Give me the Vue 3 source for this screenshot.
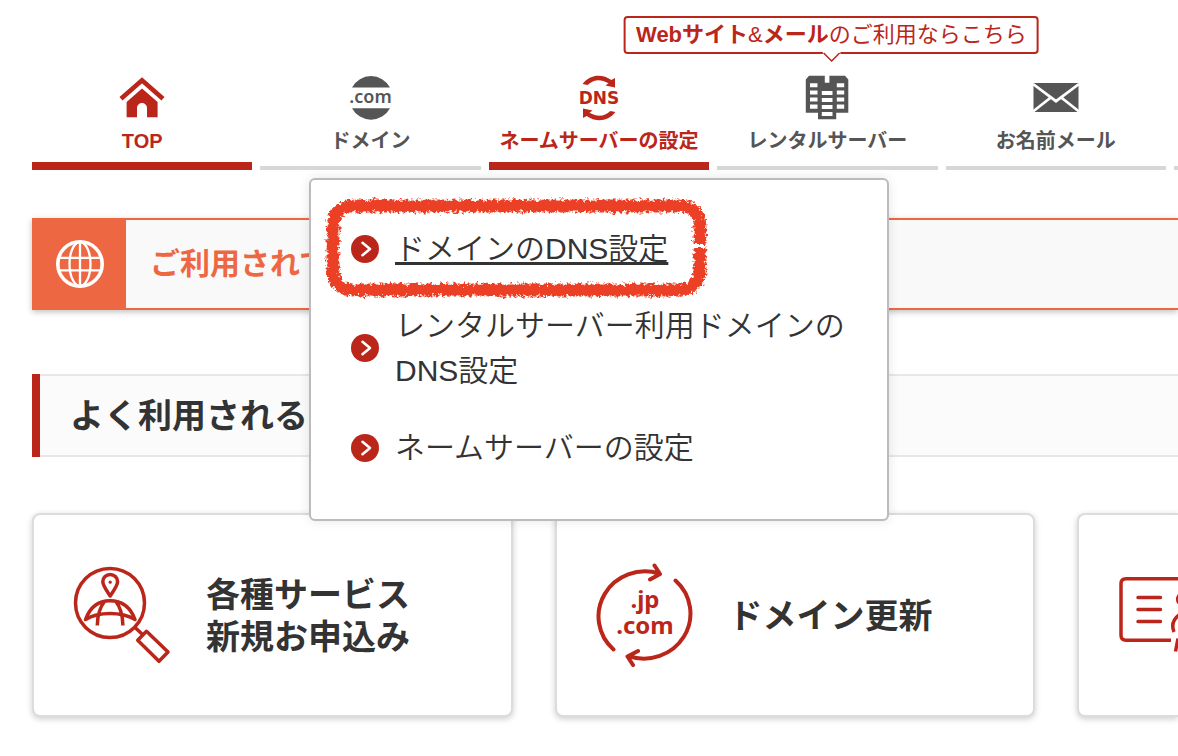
<script setup>
const menuItems = [
  { label: 'ドメインのDNS設定', current: true },
  { label: 'レンタルサーバー利用ドメインのDNS設定', current: false },
  { label: 'ネームサーバーの設定', current: false },
]
</script>

<template>
  <div class="page">
    <nav class="nav" aria-label="メイン">
      <div class="item active">
        <a href="#top">
          <svg class="nav-icon" viewBox="0 0 48 48" aria-hidden="true">
            <path d="M3 24.800 24 6.200l21 18.600" fill="none" stroke="currentColor" stroke-width="4.600" />
            <path d="M24 14.500 39.600 28v15.200H29V34a5 5 0 0 0-10 0v9.200H8.600V28z" fill="currentColor" />
          </svg>
          <span>TOP</span>
        </a>
      </div>
      <div class="item">
        <a href="#domain">
          <svg class="nav-icon" viewBox="0 0 48 48" aria-hidden="true">
            <path d="M5 13.500a21.500 21.500 0 0 1 38 0zM5 34.200h38a21.500 21.500 0 0 1-38 0z" fill="currentColor" />
            <text x="23.500" y="29" text-anchor="middle" class="com">.com</text>
          </svg>
          <span>ドメイン</span>
        </a>
      </div>
      <div class="item active">
        <a href="#dns">
          <svg class="nav-icon" viewBox="0 0 48 48" aria-hidden="true">
            <g id="dns-arrow" fill="currentColor">
              <path d="M7.600 10C15 .200 27 -.500 36.400 6L40 4v9.500l-9.500-2 3-2.300C25 4.500 18.500 5.500 12.600 11z" />
            </g>
            <use href="#dns-arrow" transform="rotate(180 24 24)" />
            <text x="24" y="30.400" text-anchor="middle" class="dns">DNS</text>
          </svg>
          <span>ネームサーバーの設定</span>
        </a>
        <div class="menu">
          <ul>
            <li v-for="m in menuItems" :key="m.label">
              <a href="#menu" :class="{ current: m.current }">
                <svg class="bullet" viewBox="0 0 28 28" aria-hidden="true">
                  <circle cx="14" cy="14" r="14" fill="#bb261a" />
                  <path d="M11.500 7.800 19 14l-7.500 6.200" fill="none" stroke="#fff" stroke-width="2.600" stroke-linecap="round" stroke-linejoin="round" />
                </svg>
                <span>{{ m.label }}</span>
              </a>
            </li>
          </ul>
          <svg class="crayon" viewBox="0 0 388 104" aria-hidden="true">
            <defs>
              <filter id="crayon" filterUnits="userSpaceOnUse" x="0" y="0" width="388" height="104">
                <feTurbulence type="fractalNoise" baseFrequency="0.300" numOctaves="3" seed="4" result="n" />
                <feDisplacementMap in="SourceGraphic" in2="n" scale="8" xChannelSelector="R" yChannelSelector="G" />
              </filter>
            </defs>
            <g filter="url(#crayon)" fill="none" stroke="#ec4026">
              <path d="M377 48V31Q377 10 355 10H32Q10 10 10 31V73Q10 94 32 94H355Q377 94 377 73V52" stroke-width="10.500" />
              <path d="M377 48V31Q377 10 355 10H32Q10 10 10 31V73Q10 94 32 94H355Q377 94 377 73V52" stroke-width="13" stroke-dasharray="3 1 5 1.500 2 1" />
            </g>
          </svg>
        </div>
      </div>
      <div class="item">
        <div class="callout"><b>Webサイト</b>&amp;<b>メール</b>のご利用ならこちら
          <svg class="tail" viewBox="0 0 18 10" aria-hidden="true">
            <path d="M0 0h18v2L9 9 0 2z" fill="#fff" />
            <path d="M1 1l8 8 8-8" fill="none" stroke="#bb261a" stroke-width="1.500" />
          </svg>
        </div>
        <a href="#server">
          <svg class="nav-icon" viewBox="0 0 48 48" aria-hidden="true">
            <path fill="currentColor" fill-rule="evenodd" d="M6 1.800h15.800v7h4.600v-7H42l3.300 3.700v33.300H33.200v6.400H15v-6.400H2.800V5.500zM7 9.300v4h7.500v-4zm0 7.200v4h7.500v-4zm0 7v4h7.500v-4zm0 7v4.200h7.500v-4.200zM33.800 9.300v4h7.400v-4zm0 7.200v4h7.400v-4zm0 7v4h7.400v-4zm0 7v4.200h7.400v-4.200zM18.800 17v4h10.700v-4zm0 7v4h10.700v-4zm0 7v4h10.700v-4zm0 7v4h10.700v-4z" />
          </svg>
          <span>レンタルサーバー</span>
        </a>
      </div>
      <div class="item">
        <a href="#mail">
          <svg class="nav-icon" viewBox="0 0 48 48" aria-hidden="true">
            <path d="M1.500 9h45v29h-45z" fill="currentColor" />
            <path d="M1 10 24 27.200 47 10M1 37.500 18.800 23.500M47 37.500 29.200 23.500" fill="none" stroke="#fff" stroke-width="2.800" />
          </svg>
          <span>お名前メール</span>
        </a>
      </div>
      <div class="item"></div>
    </nav>

    <section class="notice">
      <div class="notice-icon">
        <svg viewBox="0 0 48 48" fill="none" stroke="#fff" stroke-width="2.300" aria-hidden="true">
          <circle cx="24" cy="24" r="22.200" stroke-width="3.600" />
          <ellipse cx="24" cy="24" rx="10.500" ry="22" />
          <path d="M24 2v44M4 17.800h40M4 30.400h40" />
        </svg>
      </div>
      <p>ご利用されて</p>
    </section>

    <div class="heading">
      <h2>よく利用される</h2>
    </div>

    <section class="cards">
      <a class="card" href="#apply">
        <svg class="card-icon" viewBox="0 0 104 104" fill="none" stroke="#bb261a" stroke-width="3.500" aria-hidden="true">
          <circle cx="40" cy="40" r="34.500" />
          <path d="M40.200 33C36.500 27.500 32.800 22.500 32.800 18.800a7.400 7.400 0 0 1 14.800 0C47.600 22.500 43.900 27.500 40.200 33z" stroke-linejoin="round" />
          <circle cx="40.200" cy="19.200" r="1.600" fill="#bb261a" stroke="none" />
          <path d="M15.500 56.500C20.500 43 29.500 37.800 40 37.800S60 43 65 56.500C51.500 48.500 28.500 48.500 15.500 56.500zM34.500 38.500C30 44 27.500 52 27.300 62.500M45.800 38.500C50.300 44 52.700 52 52.900 62.500" stroke-linejoin="round" />
          <path d="M64.500 64l7.500 7M76.500 68.300 98 89 89 98.300 67.700 77.300z" stroke-linejoin="round" />
        </svg>
        <span>各種サービス<br>新規お申込み</span>
      </a>
      <a class="card" href="#renew">
        <svg class="card-icon" viewBox="0 0 104 104" aria-hidden="true">
          <g fill="none" stroke="#bb261a" stroke-width="4" stroke-linecap="round" stroke-linejoin="round">
            <path d="M20.500 86.500A46.500 45 0 0 1 66 10.500M61.500 2.500 67 11 57 16.500" />
            <path d="M82.500 17.500A46.500 45 0 0 1 35.500 93M45 88 34.500 93.500 40 102" />
          </g>
          <text x="52" y="45" text-anchor="middle" class="tld">.jp</text>
          <text x="52" y="71" text-anchor="middle" class="tld">.com</text>
        </svg>
        <span>ドメイン更新</span>
      </a>
      <a class="card cut" href="#account" aria-label="会員情報">
        <svg class="card-icon" viewBox="0 0 104 104" fill="none" stroke="#bb261a" stroke-width="3.500" stroke-linecap="round" aria-hidden="true">
          <path d="M104 15.700H9q-5 0-5 5v51.600q0 5 5 5h45" stroke-linecap="butt" />
          <path d="M21 34.500h22.500M21 46.500h22.500M21 58.500h22.500" />
          <path d="M63 31q-4 5-1 9M62 52q-9 7-5 17M61 75.500l-2.500 13" stroke-linecap="butt" />
        </svg>
      </a>
    </section>
  </div>
</template>

<style>
body {
  margin: 0;
  background: #fff;
}
</style>

<style scoped>
.page {
  padding: 62px 0 40px 32px;
  overflow: hidden;
  font-family: "Liberation Sans", "Noto Sans CJK JP", sans-serif;
  color: #333;
}
a {
  color: inherit;
  text-decoration: none;
}
svg {
  display: block;
  flex: none;
}
.nav {
  display: grid;
  grid-template-columns: repeat(5, 1fr) 4px;
  gap: 8px;
  position: relative;
  z-index: 2;
}
.item {
  position: relative;
  height: 104px;
  border-bottom: 4px solid #d7d7d7;
  color: #555;
  font-size: 20px;
  font-weight: 700;
}
.item.active {
  height: 100px;
  border-bottom: 8px solid #bb261a;
  color: #bb261a;
}
.item > a {
  display: flex;
  flex-direction: column;
  align-items: center;
  padding-top: 12px;
  line-height: 38px;
  white-space: nowrap;
}
.nav-icon {
  width: 48px;
  height: 48px;
}
.com {
  font: 600 18px "Noto Sans", sans-serif;
  fill: currentColor;
}
.dns {
  font: 700 17px "DejaVu Sans", sans-serif;
  fill: currentColor;
}
.tld {
  font: 700 24px "Noto Sans", sans-serif;
  fill: #bb261a;
}
.callout {
  position: absolute;
  top: -46px;
  left: calc(50% + 4px);
  transform: translateX(-50%);
  padding: 0 10px;
  border: 2px solid #bb261a;
  border-radius: 4px;
  background: #fff;
  color: #bb261a;
  font-size: 22px;
  font-weight: 400;
  line-height: 34px;
  white-space: nowrap;
}
.callout b {
  font-weight: 700;
}
.tail {
  position: absolute;
  top: 100%;
  left: calc(50% - 9px);
  width: 18px;
  height: 10px;
}
.menu {
  position: absolute;
  top: calc(100% + 16px);
  left: 50%;
  box-sizing: border-box;
  width: 580px;
  padding: 46px 40px 49px;
  transform: translateX(-50%);
  border: 2px solid #bbb;
  border-radius: 6px;
  background: #fff;
  box-shadow: 0 0 12px rgba(0, 0, 0, 0.1);
  color: #333;
  font-size: 30px;
  font-weight: 350;
  line-height: 45px;
}
.menu ul {
  display: flex;
  flex-direction: column;
  gap: 32px;
  margin: 0;
  padding: 0;
  list-style: none;
}
.menu a {
  display: flex;
  align-items: center;
  gap: 16px;
}
.menu .current span {
  text-decoration: underline;
  text-decoration-thickness: 3px;
  text-underline-offset: 3px;
  text-decoration-skip-ink: none;
}
.bullet {
  width: 28px;
  height: 28px;
}
.crayon {
  position: absolute;
  top: 16px;
  left: 12px;
  width: 388px;
  height: 104px;
  pointer-events: none;
}
.notice {
  display: flex;
  height: 88px;
  margin-top: 48px;
  border: 2px solid #ed6842;
  border-width: 2px 0 2px 2px;
  background: #f9f9f9;
  box-shadow: 0 2px 6px rgba(0, 0, 0, 0.25);
}
.notice-icon {
  display: flex;
  align-items: center;
  justify-content: center;
  width: 92px;
  background: #ed6842;
}
.notice-icon svg {
  width: 48px;
  height: 48px;
}
.notice p {
  margin: 0;
  padding-left: 24px;
  color: #ed6842;
  font-size: 30px;
  font-weight: 700;
  line-height: 88px;
}
.heading {
  margin-top: 64px;
  border-left: 8px solid #bb261a;
}
.heading h2 {
  margin: 0;
  padding: 2px 0 0 30px;
  border: solid #e7e7e7;
  border-width: 2px 0;
  background: #fbfbfb;
  font-size: 34px;
  font-weight: 700;
  line-height: 77px;
}
.cards {
  display: grid;
  grid-template-columns: 1fr 1fr 101px;
  gap: 42px;
  margin-top: 56px;
}
.card {
  display: flex;
  align-items: center;
  gap: 32px;
  box-sizing: border-box;
  height: 204px;
  padding-left: 36px;
  border: 2px solid #dcdcdc;
  border-radius: 8px;
  background: #fff;
  box-shadow: 0 2px 6px rgba(0, 0, 0, 0.2);
  font-size: 34px;
  font-weight: 700;
  line-height: 42px;
  white-space: nowrap;
}
.card span {
  padding-top: 2px;
}
.card.cut {
  padding-left: 38px;
  border-right: 0;
  border-radius: 8px 0 0 8px;
  overflow: hidden;
}
.card-icon {
  width: 104px;
  height: 104px;
}
</style>
